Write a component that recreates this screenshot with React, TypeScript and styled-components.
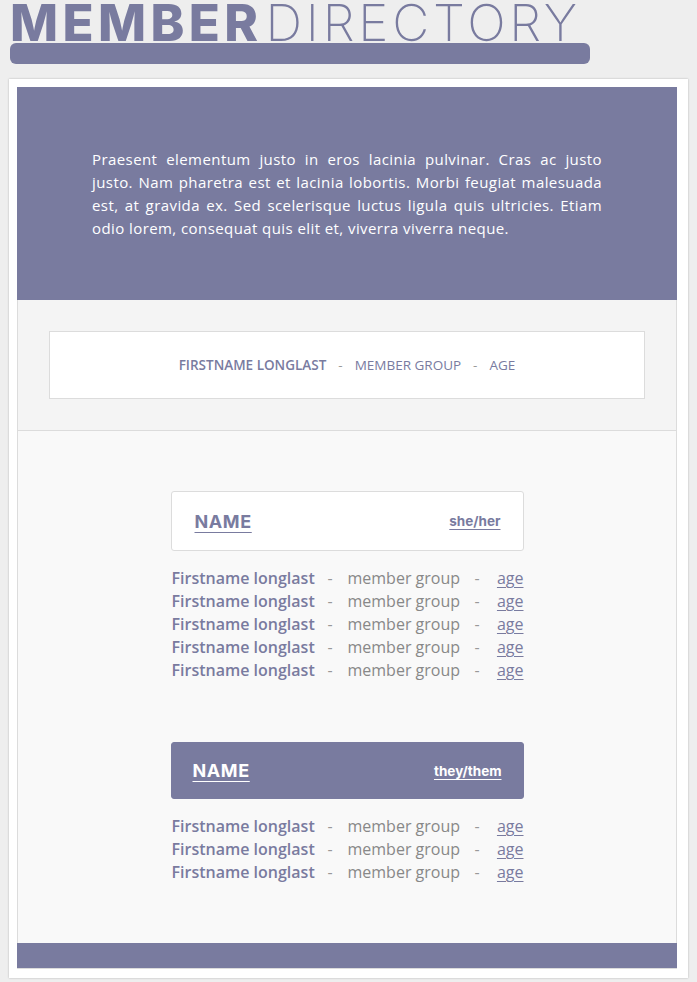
import React from "react";
import styled, { createGlobalStyle } from "styled-components";

const purple = "#797b9f";

const Global = createGlobalStyle`
  html, body { margin: 0; padding: 0; background: #eeeeee; }
  body { font-family: "Open Sans", "Liberation Sans", sans-serif; }
  * { box-sizing: border-box; }
`;

const Page = styled.div`
  width: 697px;
  padding: 0 9px 4px 9px;
`;

const Header = styled.header`
  padding: 0 98px 0 1px;
  display: flex;
  flex-direction: column;
`;

const Title = styled.h1`
  margin: 0;
  padding-top: 2px;
  font-family: Inter, "Liberation Sans", sans-serif;
  font-size: 51px;
  line-height: 41px;
  color: ${purple};
  white-space: nowrap;
  display: flex;
  align-items: flex-start;
`;

const Bold = styled.span`
  font-weight: 800;
  letter-spacing: 4.4px;
`;

const Thin = styled.span`
  font-weight: 200;
  margin-left: 3px;
  letter-spacing: 3.8px;
`;

const TitleBar = styled.div`
  height: 21px;
  background: ${purple};
  border-radius: 6px;
`;

const Card = styled.main`
  margin-top: 15px;
  background: #fff;
  box-shadow: 0 0 2px rgba(0, 0, 0, 0.25);
  padding: 8px 11px 9px 8px;
`;

const Inner = styled.div`
  border: 1px solid #dcdcdc;
  border-top: none;
  display: flex;
  flex-direction: column;
`;

const Intro = styled.section`
  background: ${purple};
  height: 213px;
  margin: 0 -1px;
  padding: 61px 75px 0 75px;
`;

const IntroText = styled.p`
  margin: 0;
  color: #fff;
  font-family: "Open Sans", sans-serif;
  font-size: 15px;
  letter-spacing: 0.42px;
  line-height: 23px;
  text-align: justify;
`;

const LegendSection = styled.section`
  background: #f4f4f4;
  padding: 31px;
  border-bottom: 1px solid #dcdcdc;
`;

const LegendBox = styled.div`
  background: #fff;
  border: 1px solid #dcdcdc;
  height: 68px;
  display: flex;
  align-items: center;
  justify-content: center;
  font-family: "Open Sans", sans-serif;
  font-size: 13.5px;
  color: ${purple};
  text-transform: uppercase;
  gap: 12px;
`;

const LegendStrong = styled.span`
  font-weight: 600;
`;

const LegendSep = styled.span`
  color: #999;
`;

const ListSection = styled.section`
  background: #f9f9f9;
  padding: 60px 0 59px 0;
  display: flex;
  flex-direction: column;
  align-items: center;
  gap: 60px;
`;

const Group = styled.div`
  width: 353px;
  display: flex;
  flex-direction: column;
`;

const GroupHead = styled.div<{ $filled?: boolean }>`
  height: ${(p) => (p.$filled ? "57px" : "60px")};
  border-radius: 3px;
  border: 1px solid ${(p) => (p.$filled ? purple : "#dcdcdc")};
  background: ${(p) => (p.$filled ? purple : "#fff")};
  color: ${(p) => (p.$filled ? "#fff" : purple)};
  display: flex;
  align-items: center;
  justify-content: space-between;
  padding: 0 ${(p) => (p.$filled ? "21px" : "22px")} 0 ${(p) => (p.$filled ? "21px" : "23px")};
  margin-bottom: 16px;
`;

const GroupName = styled.span`
  font-family: Inter, "Liberation Sans", sans-serif;
  font-weight: 700;
  font-size: 18px;
  letter-spacing: 0.6px;
  text-decoration: underline;
  text-underline-offset: 4px;
  text-decoration-thickness: 1px;
`;

const Pronoun = styled.span`
  font-family: Inter, "Liberation Sans", sans-serif;
  font-weight: 700;
  font-size: 13.5px;
  text-decoration: underline;
  text-underline-offset: 3px;
  text-decoration-thickness: 1px;
`;

const Rows = styled.div`
  display: grid;
  grid-template-columns: 156px 20px 127px 19px 1fr;
  font-family: "Open Sans", sans-serif;
  font-size: 16px;
  line-height: 23px;
  padding-left: 1px;
`;

const Name = styled.span`
  font-weight: 600;
  color: ${purple};
  white-space: nowrap;
`;

const Muted = styled.span<{ $light?: boolean }>`
  color: ${(p) => (p.$light ? "#999" : "#888")};
  white-space: nowrap;
`;

const Age = styled.span`
  color: ${purple};
  justify-self: end;
  text-decoration: underline;
  text-underline-offset: 3px;
`;

const Footer = styled.div`
  height: 25px;
  background: ${purple};
  margin: 0 -1px;
`;

function MemberRows({ count }: { count: number }) {
  return (
    <Rows>
      {Array.from({ length: count }).map((_, i) => (
        <React.Fragment key={i}>
          <Name>Firstname longlast</Name>
          <Muted $light>-</Muted>
          <Muted>member group</Muted>
          <Muted $light>-</Muted>
          <Age>age</Age>
        </React.Fragment>
      ))}
    </Rows>
  );
}

export default function App() {
  return (
    <>
      <Global />
      <Page>
        <Header>
          <Title>
            <Bold>MEMBER</Bold>
            <Thin>DIRECTORY</Thin>
          </Title>
          <TitleBar />
        </Header>
        <Card>
          <Inner>
            <Intro>
              <IntroText>
                Praesent elementum justo in eros lacinia pulvinar. Cras ac justo justo. Nam pharetra est et
                lacinia lobortis. Morbi feugiat malesuada est, at gravida ex. Sed scelerisque luctus ligula
                quis ultricies. Etiam odio lorem, consequat quis elit et, viverra viverra neque.
              </IntroText>
            </Intro>
            <LegendSection>
              <LegendBox>
                <LegendStrong>Firstname Longlast</LegendStrong>
                <LegendSep>-</LegendSep>
                <span>Member Group</span>
                <LegendSep>-</LegendSep>
                <span>Age</span>
              </LegendBox>
            </LegendSection>
            <ListSection>
              <Group>
                <GroupHead>
                  <GroupName>NAME</GroupName>
                  <Pronoun>she/her</Pronoun>
                </GroupHead>
                <MemberRows count={5} />
              </Group>
              <Group>
                <GroupHead $filled>
                  <GroupName>NAME</GroupName>
                  <Pronoun>they/them</Pronoun>
                </GroupHead>
                <MemberRows count={3} />
              </Group>
            </ListSection>
            <Footer />
          </Inner>
        </Card>
      </Page>
    </>
  );
}
